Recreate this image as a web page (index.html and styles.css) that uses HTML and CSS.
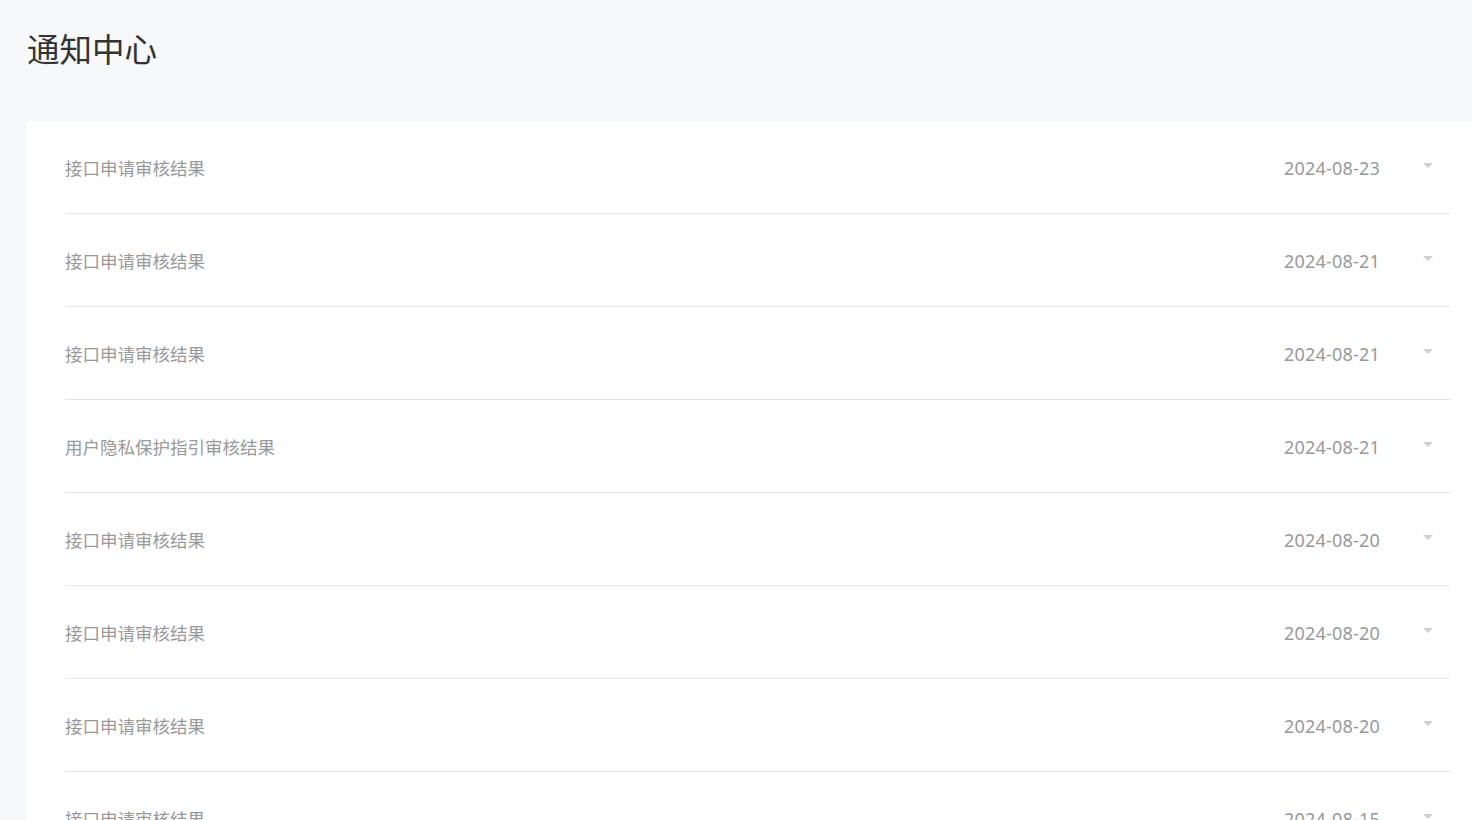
FILE: index.html
```html
<!DOCTYPE html>
<html lang="zh-CN">
<head>
<meta charset="utf-8">
<title>通知中心</title>
<link rel="stylesheet" href="styles.css">
</head>
<body>
<div class="page">
  <h1 class="title">通知中心</h1>
  <div class="card">
    <div class="row"><span class="name">接口申请审核结果</span><span class="date">2024-08-23</span><span class="arrow"></span></div>
    <div class="row"><span class="name">接口申请审核结果</span><span class="date">2024-08-21</span><span class="arrow"></span></div>
    <div class="row"><span class="name">接口申请审核结果</span><span class="date">2024-08-21</span><span class="arrow"></span></div>
    <div class="row"><span class="name">用户隐私保护指引审核结果</span><span class="date">2024-08-21</span><span class="arrow"></span></div>
    <div class="row"><span class="name">接口申请审核结果</span><span class="date">2024-08-20</span><span class="arrow"></span></div>
    <div class="row"><span class="name">接口申请审核结果</span><span class="date">2024-08-20</span><span class="arrow"></span></div>
    <div class="row"><span class="name">接口申请审核结果</span><span class="date">2024-08-20</span><span class="arrow"></span></div>
    <div class="row"><span class="name">接口申请审核结果</span><span class="date">2024-08-15</span><span class="arrow"></span></div>
  </div>
</div>
</body>
</html>
```
FILE: styles.css
```css
html, body {
  margin: 0;
  padding: 0;
  background: #f7f8fa;
  font-family: "Noto Sans", "Noto Sans CJK SC", sans-serif;
  height: 820px;
  overflow: hidden;
}
.page {
  padding: 24px 0 0 27px;
}
.title {
  margin: 0;
  font-family: "Noto Sans CJK SC", sans-serif;
  font-size: 32.5px;
  font-weight: 400;
  line-height: 48px;
  color: #333333;
  height: 48px;
}
.card {
  margin-top: 49px;
  background: #ffffff;
  border-radius: 4px 0 0 0;
  padding: 0 22px 0 38px;
}
.row {
  display: flex;
  align-items: center;
  box-sizing: border-box;
  height: 93px;
  padding-top: 2px;
  border-bottom: 1px solid #e6e6e6;
  font-size: 18px;
  color: #999999;
}
.name {
  flex: 1;
  font-size: 17.5px;
  line-height: 26px;
}
.date {
  line-height: 26px;
  letter-spacing: 0.2px;
}
.arrow {
  width: 0;
  height: 0;
  border-left: 5px solid transparent;
  border-right: 5px solid transparent;
  border-top: 5px solid #d0d0d4;
  margin-left: 43px;
  margin-right: 17px;
  margin-bottom: 6px;
}
```
